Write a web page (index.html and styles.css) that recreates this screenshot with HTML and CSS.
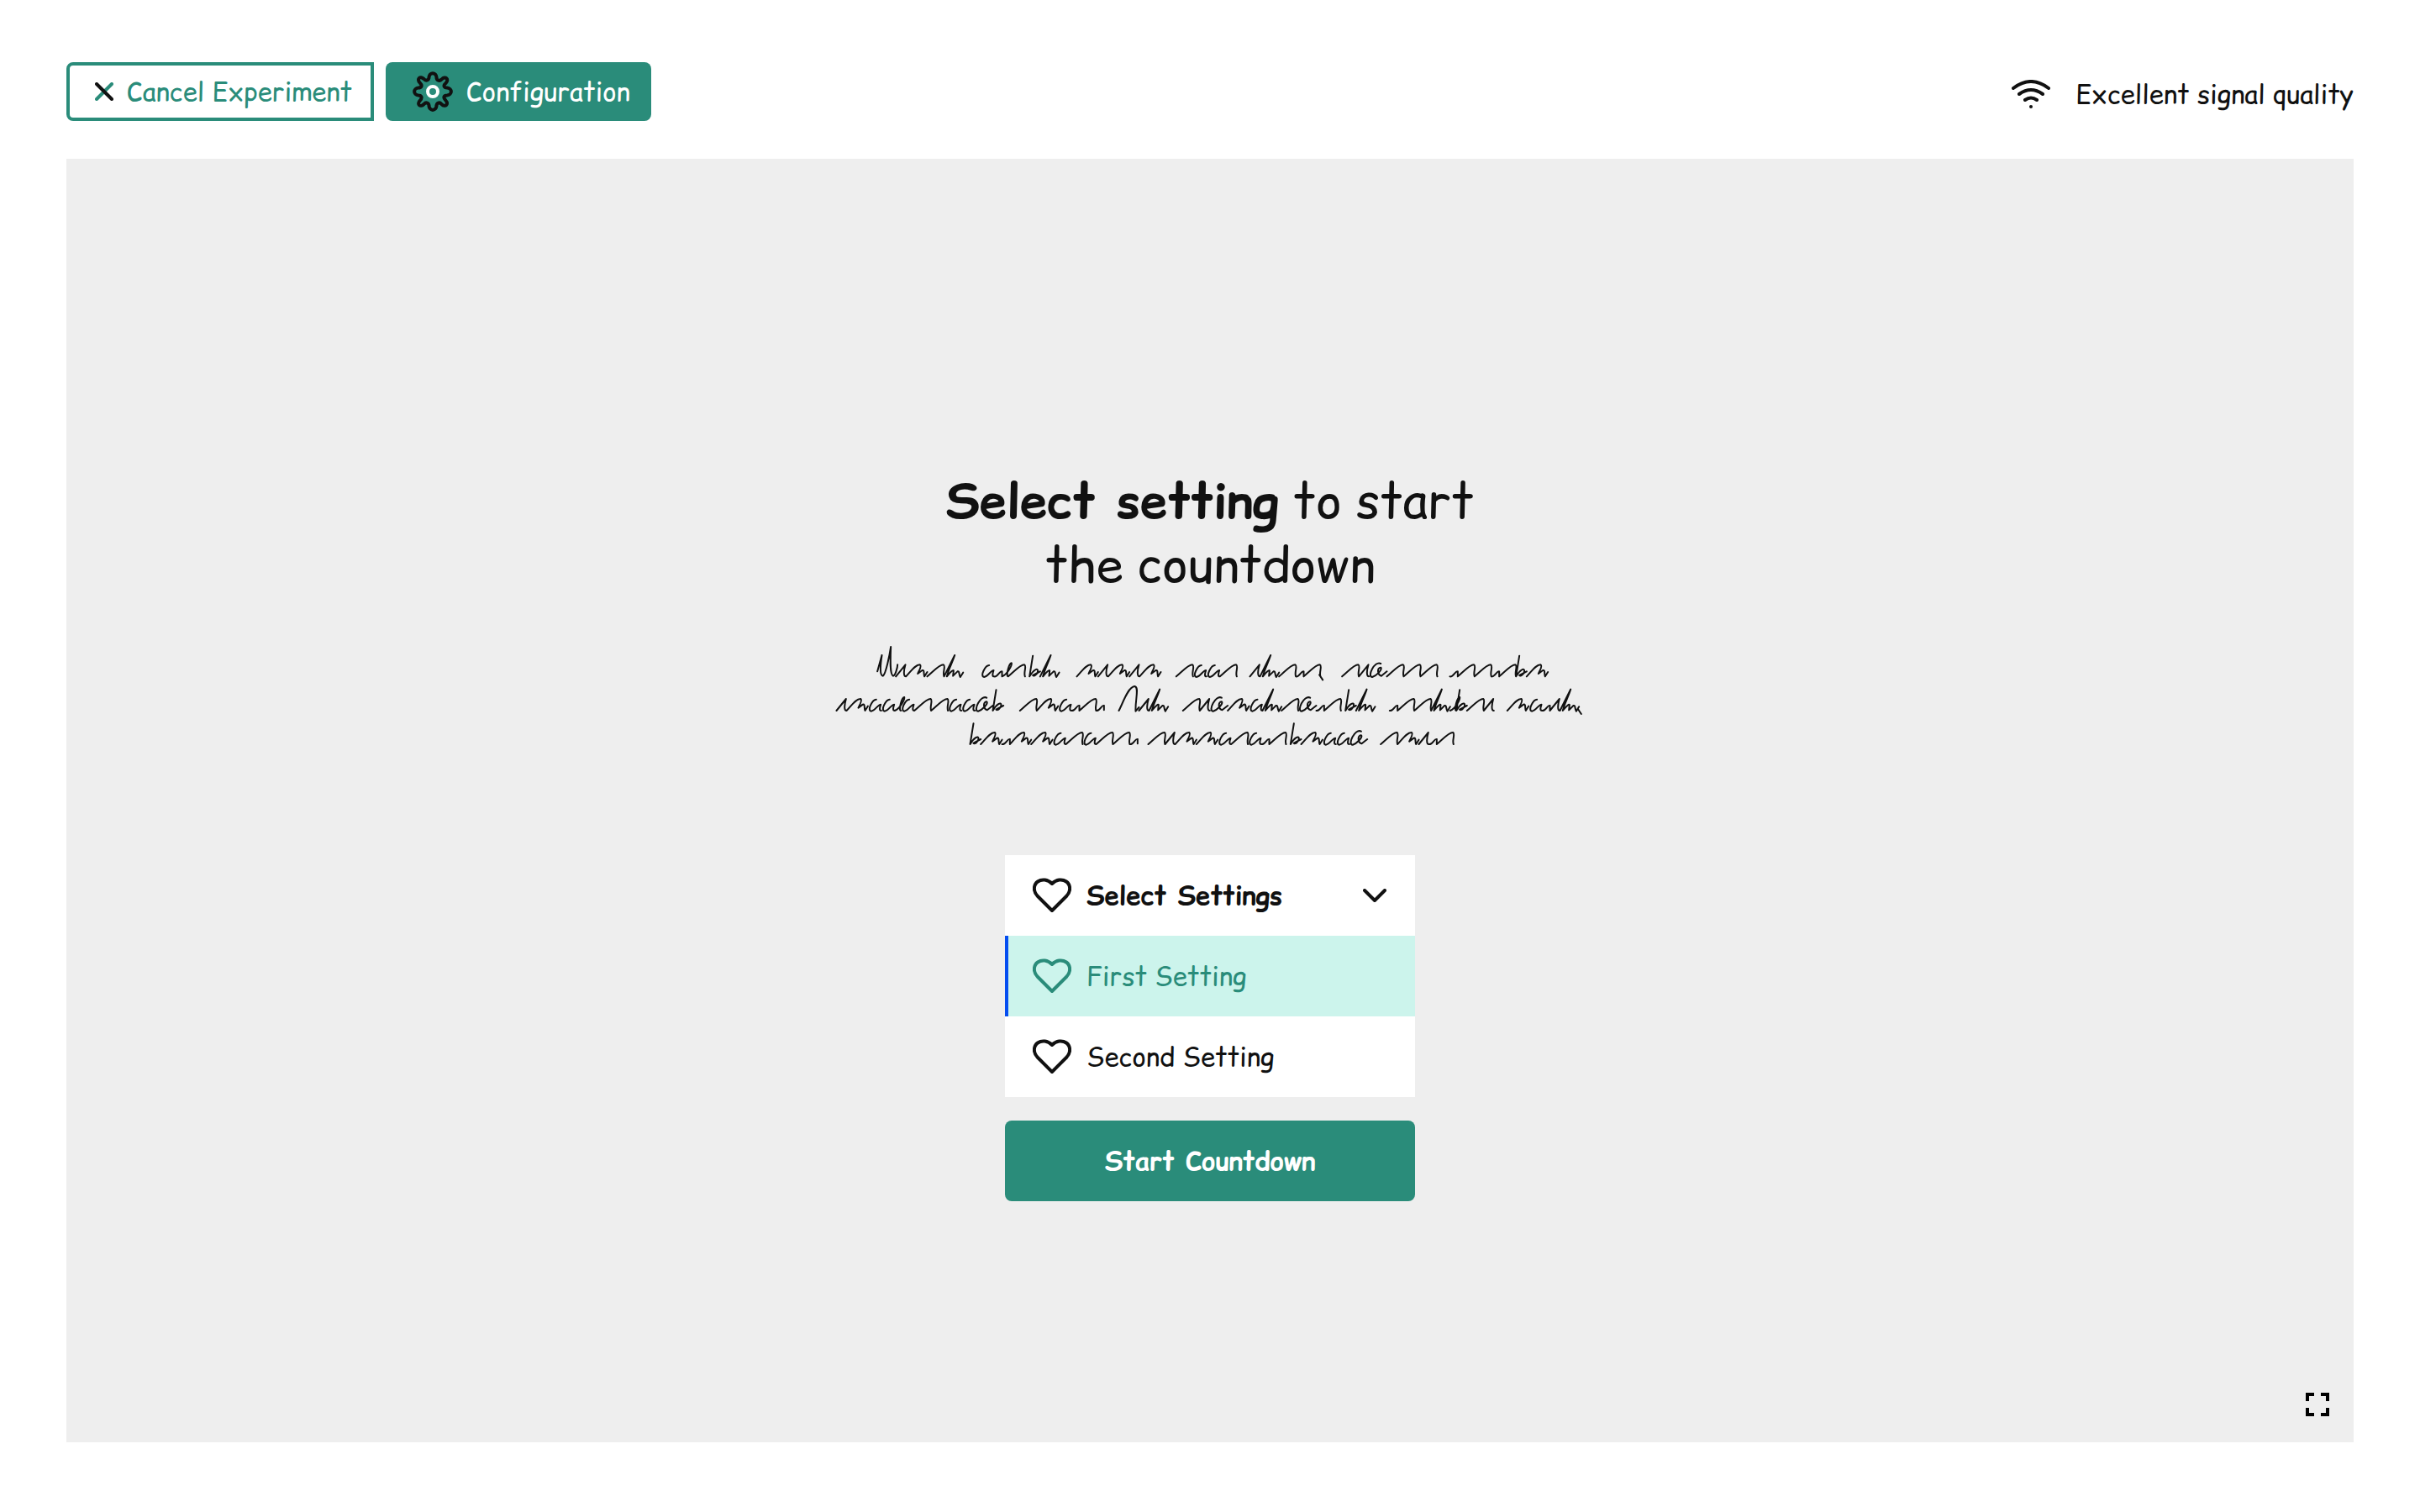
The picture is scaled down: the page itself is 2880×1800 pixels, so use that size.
FILE: index.html
```html
<!DOCTYPE html>
<html lang="en">
<head>
<meta charset="utf-8">
<meta name="viewport" content="width=device-width, initial-scale=1">
<title>Experiment setup</title>
<link rel="stylesheet" href="styles.css">
</head>
<body>
<svg class="sprite" aria-hidden="true">
  <symbol id="heart" viewBox="0 0 46 42"><path d="M23 39L6 22C0 16 1 8 6 4.500C11 1 18 2 23 7C28 2 35 1 40 4.500C45 8 46 16 40 22Z"/></symbol>
</svg>
<header class="toolbar">
  <div class="actions">
    <button class="btn btn-outline" type="button">
      <svg class="icon-close" viewBox="0 0 22 22"><path d="M20 2L2 20"/><path class="dark" d="M2 2L20 20"/></svg>
      Cancel Experiment
    </button>
    <button class="btn btn-solid" type="button">
      <svg class="icon-gear" viewBox="0 0 48 48"><path class="dark" d="M19.500 7C20 .5 28 .5 28.500 7C28.500 11 32 12 34.500 9.500C39 4.500 44 9.500 39.500 14C36 17 37.500 19.500 41 19.500C47.500 20 47.500 28 41 28.500C37.500 28.500 36 31 39 34C43.500 39 39 43.500 34.500 39C32 36 28.500 37.500 28.500 41C28 47.500 20 47.500 19.500 41C19.500 37.500 16 36 13.500 39C9 43.500 4.500 39 9 34.500C12 31 10.500 28.500 7 28.500C.5 28 .5 20 7 19.500C10.500 19.500 12 17 9 14C4.500 9 9 4.500 13.500 9C16 12 19.500 10.500 19.500 7Z"/><circle cx="24" cy="24" r="6"/></svg>
      Configuration
    </button>
  </div>
  <div class="signal">
    <svg class="icon-wifi" viewBox="0 0 46 34"><path d="M2 10Q23-6 44 10M9 17Q23 7 37 17M16 24Q23 19 30 24"/><circle cx="23" cy="32" r="2"/></svg>
    <span>Excellent signal quality</span>
  </div>
</header>
<main class="stage">
  <section class="setup">
    <h1><strong>Select setting</strong> to start<br>the countdown</h1>
    <svg class="scribble" viewBox="30 50 2690 390" aria-hidden="true"><path id="scribble"/></svg>
    <div class="picker">
      <button class="row row-head" type="button" aria-haspopup="listbox" aria-expanded="true">
        <svg class="icon-heart"><use href="#heart"/></svg>
        <span>Select Settings</span>
        <svg class="icon-chevron" viewBox="0 0 28 16"><path d="M2 2L14 14L26 2"/></svg>
      </button>
      <div class="options" role="listbox" aria-label="Settings">
        <button class="row row-active" type="button" role="option" aria-selected="true">
          <svg class="icon-heart"><use href="#heart"/></svg>
          <span>First Setting</span>
        </button>
        <button class="row" type="button" role="option" aria-selected="false">
          <svg class="icon-heart"><use href="#heart"/></svg>
          <span>Second Setting</span>
        </button>
      </div>
    </div>
    <button class="start" type="button">Start Countdown</button>
  </section>
  <button class="fullscreen" type="button" aria-label="Full screen">
    <svg viewBox="0 0 28 28"><path d="M2 10V2H10M18 2H26V10M26 18V26H18M10 26H2V18"/></svg>
  </button>
</main>
<script src="scribble.js"></script>
</body>
</html>
```
FILE: styles.css
```css
* { box-sizing: border-box; }

:root {
  --green: #2a8c7a;
  --ink: #111111;
  --mint: #ccf4ec;
  --panel: #eeeeee;
}

body {
  margin: 0;
  min-height: 100vh;
  padding: 74px 79px 83px;
  display: flex;
  flex-direction: column;
  gap: 45px;
  background: #fff;
  color: var(--ink);
  font-family: "Comic Relief", "Comic Neue", "Comic Sans MS", Lato, sans-serif;
  font-size: 31px;
  line-height: 40px;
}

button {
  font: inherit;
  color: inherit;
  border: 0;
  padding: 0;
  background: none;
  cursor: pointer;
}

svg {
  flex: none;
  fill: none;
  stroke: currentColor;
  stroke-width: 4;
  stroke-linecap: round;
  stroke-linejoin: round;
}

.sprite { position: absolute; width: 0; height: 0; }
.dark { stroke: var(--ink); }

.toolbar,
.actions,
.signal,
.btn,
.row {
  display: flex;
  align-items: center;
}

.toolbar { justify-content: space-between; }
.actions { gap: 14px; }

.btn {
  height: 70px;
  gap: 16px;
  white-space: nowrap;
}

.btn-outline {
  width: 366px;
  padding-left: 30px;
  border: 4px solid var(--green);
  border-radius: 8px 0 0 8px;
  color: var(--green);
}

.btn-solid {
  width: 316px;
  padding-left: 32px;
  border-radius: 8px;
  background: var(--green);
  color: #fff;
}

.icon-close { width: 22px; height: 22px; }
.icon-gear { width: 48px; height: 48px; }
.icon-wifi { width: 46px; height: 34px; }
.icon-wifi circle { fill: currentColor; stroke: none; }
.icon-heart { width: 46px; height: 42px; }
.icon-chevron { width: 28px; height: 16px; margin-left: auto; }

.signal { gap: 30px; padding-top: 6px; }

.stage {
  position: relative;
  flex: 1;
  display: flex;
  justify-content: center;
  background: var(--panel);
}

.setup {
  display: flex;
  flex-direction: column;
  align-items: center;
  padding: 370px 0 280px;
}

h1 {
  margin: 0;
  font-size: 58px;
  line-height: 76px;
  font-weight: 400;
  text-align: center;
}

.scribble {
  width: 897px;
  height: 130px;
  margin: 55px 0 122px;
}

.scribble path { stroke-width: 6; }

.picker,
.start { width: 488px; }

.picker { background: #fff; }

.row {
  width: 100%;
  height: 96px;
  gap: 18px;
  padding: 0 34px 0 33px;
}

.row-head { font-weight: 700; }

.row-active {
  padding-left: 29px;
  border-left: 4px solid #044df0;
  background: var(--mint);
  color: var(--green);
}

.start {
  height: 96px;
  margin-top: 28px;
  border-radius: 8px;
  background: var(--green);
  color: #fff;
  font-weight: 700;
}

.fullscreen {
  position: absolute;
  right: 29px;
  bottom: 31px;
  width: 28px;
  height: 28px;
  color: #000;
}

.fullscreen svg {
  display: block;
  width: 28px;
  height: 28px;
  stroke-linecap: butt;
  stroke-linejoin: miter;
}
```
FILE: scribble.js
```js
// Pen strokes that make up the scribbled placeholder lines.
const strokes = {
  R: "l34-42c-6 20-8 42 2 42",
  N: "c22-18 42-42 58-42c9 4-4 28 2 42",
  M: "c18-18 32-42 50-42c8 4-4 22-8 32l16-12c9-2 4 12 8 22l10-16m0 16",
  A: "m30-40c-14 0-34 40-18 42c14-2 24-24 34-24c-4 12-6 22 2 22",
  H: "l38-76c-8 26-22 50-28 76c12-16 24-26 24-20l-2 18l16-16c8-2 4 10 10 20l10-16m0 14",
  B: "m12-74l-12 74c14-24 30-32 30-20c0 10-14 22-18 16l26-14m0 18",
  C: "m42-46c-22-12-50 48-30 48c14-4 38-28 30-34c-14 0-12 26 2 30l20-16m0 18",
  L: "c20-8 36-40 34-48c-8-4-22 48-12 48",
  Z: "c12 4 20-22 28-18l0 16m0 2",
  U: "m0-18l16-58c-6 38-8 73 4 74c10-6 24-76 28-104c-2 48-4 98 8 104c8 0 16-31 16-40m-6 42",
  V: "c12-20 32-85 56-87c18 2 2 47 4 89l12-14m0 12",
  ",": "m-4-6l12 18",
  " ": "m16 0"
};

const words = [
  [186, 168, "URMNH"], [555, 168, "AZLN BH"], [898, 168, "MRMRM"],
  [1253, 168, "NAAN"], [1516, 168, "RHNZN,"], [1845, 168, "NRCNNN"],
  [2230, 168, "ZNNZNBM"],
  [40, 290, "RMAALANNAACB"], [695, 290, "NMAZNZ"], [1048, 290, "VRH"],
  [1277, 290, "NRCMAHNCZN BH"], [2015, 290, "ZNNHLBNR"], [2435, 290, "MAZRH,"],
  [517, 410, "BMZMMANANNZ"], [1153, 410, "NRMMANAZN BMAAC"],
  [1983, 410, "NMRZN"]
];

document.getElementById("scribble").setAttribute("d", words
  .map(([x, y, pen]) => `M${x} ${y}` + [...pen].map(k => strokes[k]).join(""))
  .join(""));
```
